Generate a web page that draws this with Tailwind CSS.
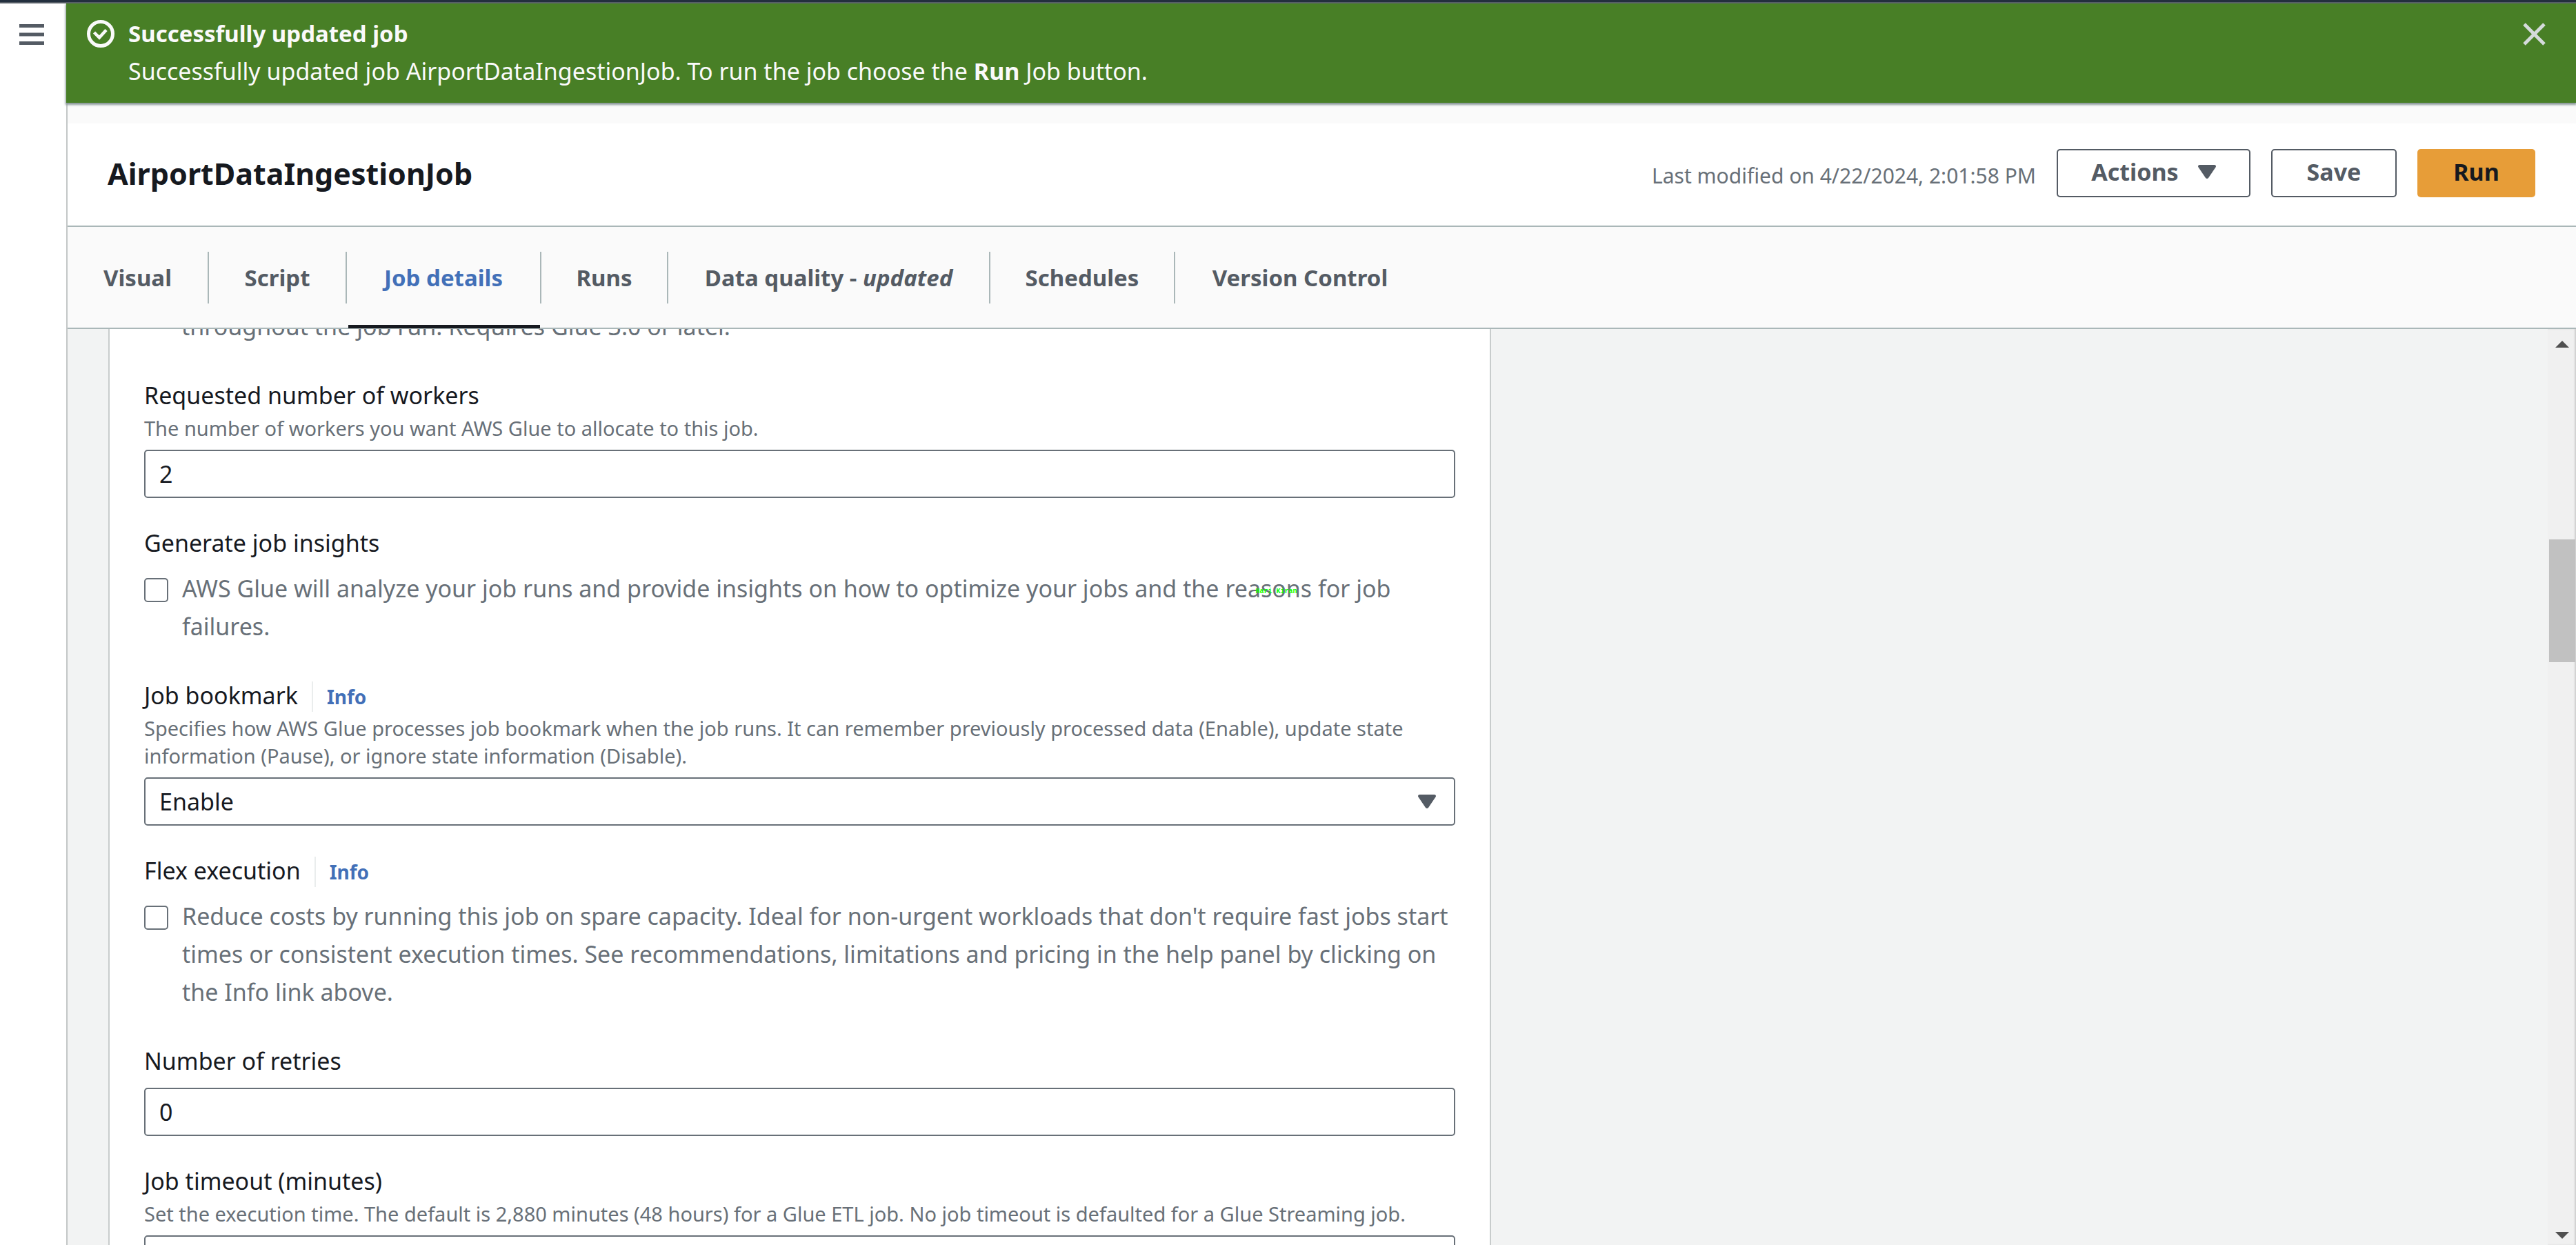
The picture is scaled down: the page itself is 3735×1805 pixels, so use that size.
<!DOCTYPE html>
<html lang="en">
<head>
<meta charset="utf-8">
<title>AirportDataIngestionJob</title>
<script src="https://cdn.jsdelivr.net/npm/@tailwindcss/browser@4"></script>
</head>
<body class="flex h-screen flex-col overflow-hidden bg-white font-['Noto_Sans',sans-serif] text-[34px] leading-[55px] text-[#16191f]">
<div class="h-[5px] shrink-0 border-b-2 border-[#545b64] bg-[#232f3e]"></div>
<div class="flex min-h-0 flex-1">
  <aside class="w-24 shrink-0 pt-[30px] pl-7">
    <button aria-label="Open navigation" class="block">
      <svg class="h-[30px] w-9" viewBox="0 0 36 30" fill="#545b64"><path d="M0 0h36v5H0zM0 12.500h36v5H0zM0 25h36v5H0z"/></svg>
    </button>
  </aside>
  <div class="relative flex min-w-0 flex-1 flex-col border-l-2 border-[#c3c7c7]">
    <section class="relative z-10 -ml-0.5 flex items-start bg-[#487f26] pt-4 pr-11 pb-[18px] pl-[30px] text-[#fafafa] shadow-[0_2px_3px_1px_#879596]">
      <svg class="mt-2 h-10 w-10 shrink-0" viewBox="0 0 40 40" fill="none" stroke="#fafafa"><circle cx="20" cy="20" r="17.500" stroke-width="5"/><path d="M10.500 18l7.500 7.500L28 14.500" stroke-width="4.500"/></svg>
      <div class="ml-5 flex-1">
        <p class="text-[33px] font-bold">Successfully updated job</p>
        <p>Successfully updated job AirportDataIngestionJob. To run the job choose the <b>Run</b> Job button.</p>
      </div>
      <button aria-label="Dismiss" class="mt-3">
        <svg class="h-[33px] w-[33px]" viewBox="0 0 33 33" fill="none" stroke="#d5dbdb" stroke-width="5"><path d="M2 2l29 29M31 2L2 31"/></svg>
      </button>
    </section>
    <header class="flex items-center border-b-2 border-[#aab7b8] bg-white pt-[67px] pr-[59px] pb-[41px] pl-[58px] shadow-[inset_0_30px_0_#fafafa]">
      <h1 class="flex-1 text-[43px] leading-[55px] font-bold">AirportDataIngestionJob</h1>
      <p class="mt-2 mr-[30px] text-[30px] leading-10 text-[#687078]">Last modified on 4/22/2024, 2:01:58 PM</p>
      <div class="flex gap-[30px] font-bold text-[#545b64]">
        <button class="flex h-[70px] w-[281px] items-center justify-center gap-7 rounded-[5px] border-2 border-[#545b64] pb-1">Actions
          <svg class="h-5 w-[26px]" viewBox="0 0 26 20" fill="#545b64"><path d="M2 0h22q3 1 1.500 3.500L15 19q-2 2-4 0L.5 3.500Q-1 1 2 0z"/></svg>
        </button>
        <button class="h-[70px] w-[182px] rounded-[5px] border-2 border-[#545b64] pb-1">Save</button>
        <button class="h-[70px] w-[171px] rounded-[5px] bg-[#e79d38] pb-1 text-[#16191f]">Run</button>
      </div>
    </header>
    <nav class="flex h-[148px] shrink-0 items-center border-b-2 border-[#aab7b8] bg-[#fafafa] text-center text-[33px] font-bold text-[#545b64]">
      <a href="#" class="w-[205px] border-r-2 border-[#aab7b8] py-[10px]">Visual</a>
      <a href="#" class="w-[200px] border-r-2 border-[#aab7b8] py-[10px]">Script</a>
      <a href="#" class="relative w-[282px] border-r-2 border-[#aab7b8] py-[10px] text-[#4270b8]">Job details<span class="absolute right-0 -bottom-[36px] left-0.5 h-[5px] bg-[#16191f]"></span></a>
      <a href="#" class="w-[184px] border-r-2 border-[#aab7b8] py-[10px]">Runs</a>
      <a href="#" class="w-[467px] border-r-2 border-[#aab7b8] py-[10px]">Data quality - <i>updated</i></a>
      <a href="#" class="w-[268px] border-r-2 border-[#aab7b8] py-[10px]">Schedules</a>
      <a href="#" class="w-[362px] py-[10px]">Version Control</a>
    </nav>
    <div class="flex min-h-0 flex-1 bg-[#f2f3f3]">
      <main class="min-w-0 flex-1 overflow-hidden pl-[59px]">
        <form class="flex h-full w-[56.7%] flex-col gap-[38px] border-x-2 border-[#c8cccc] bg-white px-[50px]">
          <p class="-mt-[31px] shrink-0 pb-[7px] pl-[54px] text-[#687078]">throughout the job run. Requires Glue 3.0 or later.</p>
          <div class="flex shrink-0 flex-col">
            <label for="workers">Requested number of workers</label>
            <p class="mb-[11px] text-[29px] leading-10 text-[#687078]">The number of workers you want AWS Glue to allocate to this job.</p>
            <input id="workers" value="2" class="h-[70px] rounded-[5px] border-2 border-[#687078] px-5">
          </div>
          <div class="flex shrink-0 flex-col gap-[11px] pb-[7px]">
            <p>Generate job insights</p>
            <div class="flex gap-5">
              <input id="insights" type="checkbox" class="mt-3 h-[35px] w-[35px] shrink-0 appearance-none rounded-[5px] border-2 border-[#687078]">
              <label for="insights" class="text-[#687078]">AWS Glue will analyze your job runs and provide insights on how to optimize your jobs and the <span class="relative">reasons<span class="absolute top-[22px] left-11 font-['Liberation_Mono',monospace] text-[10px] leading-3 font-bold whitespace-nowrap text-[#00ff00]">Hari Kiran</span></span> for job failures.</label>
            </div>
          </div>
          <div class="flex shrink-0 flex-col">
            <div class="flex items-baseline"><label for="bookmark">Job bookmark</label><a href="#" class="ml-5 border-l-2 border-[#eaeded] pl-5 text-[28px] leading-[44px] font-bold text-[#4270b8]">Info</a></div>
            <p class="mb-[11px] text-[29px] leading-10 text-[#687078]">Specifies how AWS Glue processes job bookmark when the job runs. It can remember previously processed data (Enable), update state information (Pause), or ignore state information (Disable).</p>
            <div class="relative flex">
              <select id="bookmark" class="h-[70px] flex-1 appearance-none rounded-[5px] border-2 border-[#687078] px-5"><option>Enable</option></select>
              <svg class="pointer-events-none absolute top-[25px] right-7 h-5 w-[26px]" viewBox="0 0 26 20" fill="#545b64"><path d="M2 0h22q3 1 1.500 3.500L15 19q-2 2-4 0L.5 3.500Q-1 1 2 0z"/></svg>
            </div>
          </div>
          <div class="flex shrink-0 flex-col gap-[11px] pb-[7px]">
            <div class="flex items-baseline"><span>Flex execution</span><a href="#" class="ml-5 border-l-2 border-[#eaeded] pl-5 text-[28px] leading-[44px] font-bold text-[#4270b8]">Info</a></div>
            <div class="flex gap-5">
              <input id="flex" type="checkbox" class="mt-3 h-[35px] w-[35px] shrink-0 appearance-none rounded-[5px] border-2 border-[#687078]">
              <label for="flex" class="text-[#687078]">Reduce costs by running this job on spare capacity. Ideal for non-urgent workloads that don't require fast jobs start times or consistent execution times. See recommendations, limitations and pricing in the help panel by clicking on the Info link above.</label>
            </div>
          </div>
          <div class="flex shrink-0 flex-col gap-[11px]">
            <label for="retries">Number of retries</label>
            <input id="retries" value="0" class="h-[70px] rounded-[5px] border-2 border-[#687078] px-5">
          </div>
          <div class="flex shrink-0 flex-col">
            <label for="timeout">Job timeout (minutes)</label>
            <p class="mb-[11px] text-[29px] leading-10 text-[#687078]">Set the execution time. The default is 2,880 minutes (48 hours) for a Glue ETL job. No job timeout is defaulted for a Glue Streaming job.</p>
            <input id="timeout" class="h-[70px] rounded-[5px] border-2 border-[#687078] px-5">
          </div>
        </form>
      </main>
      <div class="flex w-[41px] shrink-0 flex-col items-center bg-[#f0f0f0] pt-[17px] pb-[9px] shadow-[inset_-2px_0_2px_#d0d0d0]">
        <svg class="h-[10px] w-5" viewBox="0 0 20 10" fill="#505050"><path d="M10 0l10 10H0z"/></svg>
        <div class="mt-[278px] h-[178px] w-[38px] bg-[#c1c1c1]"></div>
        <svg class="mt-auto h-[10px] w-5" viewBox="0 0 20 10" fill="#505050"><path d="M0 0h20L10 10z"/></svg>
      </div>
    </div>
  </div>
</div>
</body>
</html>
